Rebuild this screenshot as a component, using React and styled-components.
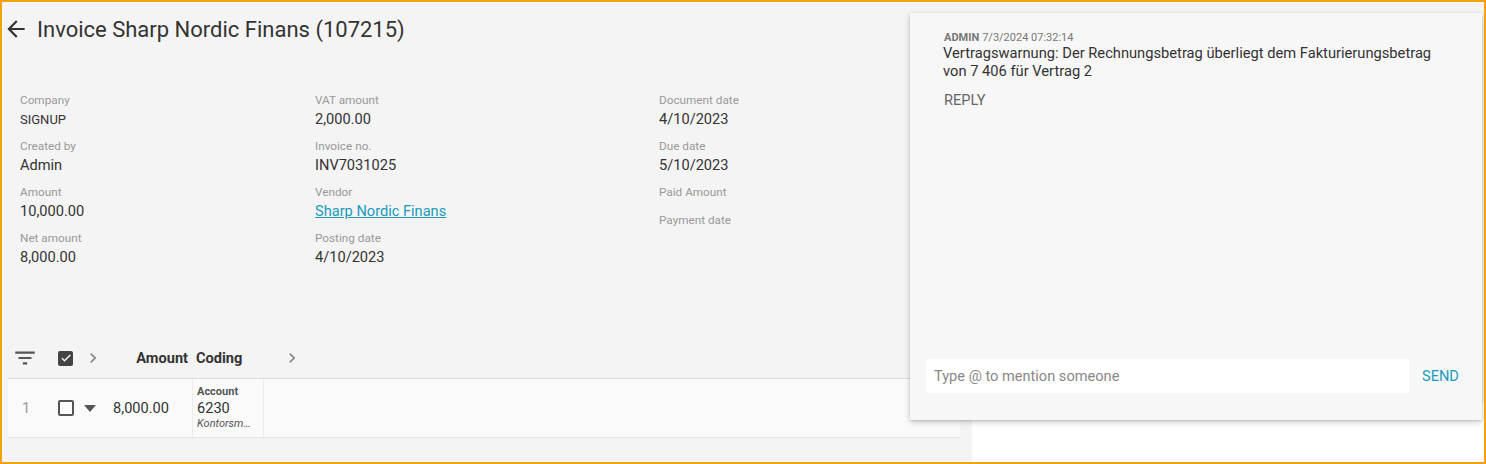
import React from "react";
import styled, { createGlobalStyle } from "styled-components";

const Global = createGlobalStyle`
  html, body { margin: 0; padding: 0; }
  body { font-family: Roboto, "Noto Sans", Arial, sans-serif; color: #333; }
  * { box-sizing: border-box; }
`;

const Frame = styled.div`
  position: relative;
  width: 1486px;
  height: 464px;
  border: 2px solid #f2a20c;
  display: flex;
  background: #f4f4f4;
  overflow: hidden;
`;

const Main = styled.div`
  width: 970px;
  display: flex;
  flex-direction: column;
  background: #f4f4f4;
`;

const Side = styled.div`
  flex: 1;
  display: flex;
  flex-direction: column;
`;

const SideTop = styled.div`
  height: 400px;
  background: #f4f4f4;
`;

const SideBody = styled.div`
  flex: 1;
  background: #fff;
`;

const Header = styled.div`
  display: flex;
  align-items: center;
  gap: 8px;
  height: 52px;
  padding: 2px 0 0 1px;
`;

const Title = styled.h1`
  margin: 0;
  font-size: 22px;
  font-weight: 400;
  color: #333;
`;

const BackButton = styled.button`
  border: 0;
  background: none;
  padding: 0;
  width: 26px;
  height: 26px;
  display: flex;
  align-items: center;
  justify-content: center;
  cursor: pointer;
`;

const Details = styled.div`
  display: grid;
  grid-template-columns: 295px 344px 1fr;
  padding: 39px 0 0 18px;
  height: 286px;
`;

const Column = styled.div`
  display: flex;
  flex-direction: column;
`;

const Field = styled.div`
  display: flex;
  flex-direction: column;
  min-height: ${(p) => (p.$empty ? "28px" : "46px")};
`;

const Label = styled.span`
  font-size: 11.75px;
  color: #999;
  line-height: 15px;
`;

const Value = styled.span`
  font-size: ${(p) => (p.$small ? "13px" : "14.6px")};
  color: #333;
  line-height: 20px;
  margin-top: ${(p) => (p.$small ? "2px" : "1px")};
`;

const Link = styled.a`
  font-size: 14.6px;
  line-height: 20px;
  margin-top: 1px;
  color: #1a9bbb;
  text-decoration: underline;
`;

const Table = styled.div`
  margin: 0 12px 0 6px;
  display: flex;
  flex-direction: column;
`;

const columns = "42px 32px 32px 78px 72px 1fr";

const HeadRow = styled.div`
  display: grid;
  grid-template-columns: ${columns};
  height: 39px;
  padding-bottom: 2px;
  align-items: center;
  border-bottom: 1px solid #dcdcdc;
`;

const BodyRow = styled.div`
  display: grid;
  grid-template-columns: ${columns};
  height: 59px;
  align-items: stretch;
  background: #fafafa;
  border-bottom: 1px solid #e6e6e6;
`;

const Cell = styled.div`
  display: flex;
  align-items: center;
  justify-content: ${(p) => p.$justify || "flex-start"};
  padding-left: ${(p) => p.$pl || 0}px;
  padding-right: ${(p) => p.$pr || 0}px;
  font-size: 14.6px;
  color: ${(p) => p.$color || "#333"};
  font-weight: ${(p) => (p.$bold ? 700 : 400)};
`;

const CodingCell = styled.div`
  display: flex;
  flex-direction: column;
  justify-content: center;
  padding-left: 4px;
  border-left: 1px solid #ececec;
  border-right: 1px solid #ececec;
`;

const CodingLabel = styled.span`
  font-size: 11px;
  font-weight: 700;
  color: #555;
  line-height: 14px;
`;

const CodingValue = styled.span`
  font-size: 14.6px;
  color: #333;
  line-height: 18px;
`;

const CodingDesc = styled.span`
  font-size: 11px;
  font-style: italic;
  color: #555;
  line-height: 14px;
`;

const Checkbox = styled.span`
  width: ${(p) => (p.$checked ? "15px" : "16px")};
  height: ${(p) => (p.$checked ? "15px" : "16px")};
  border-radius: 2px;
  display: flex;
  align-items: center;
  justify-content: center;
  background: ${(p) => (p.$checked ? "#444" : "transparent")};
  border: ${(p) => (p.$checked ? "none" : "2px solid #555")};
`;

const Panel = styled.div`
  position: absolute;
  left: 908px;
  top: 11px;
  width: 572px;
  height: 407px;
  background: #f7f7f7;
  box-shadow: 0 2px 6px rgba(0, 0, 0, 0.22), 0 1px 2px rgba(0, 0, 0, 0.1);
  display: flex;
  flex-direction: column;
  padding: 18px 16px 27px 16px;
`;

const Comment = styled.div`
  flex: 1;
  display: flex;
  flex-direction: column;
  padding-left: 17px;
`;

const Meta = styled.div`
  font-size: 11px;
  color: #777;
  line-height: 13px;
  padding-left: 1px;
`;

const Author = styled.span`
  font-weight: 700;
  margin-right: 3px;
`;

const Message = styled.div`
  font-size: 14.7px;
  color: #333;
  line-height: 18px;
  width: 500px;
`;

const ReplyButton = styled.button`
  align-self: flex-start;
  margin-top: 11px;
  border: 0;
  background: none;
  padding: 0 0 0 1px;
  font-family: inherit;
  font-size: 14.6px;
  color: #666;
  text-transform: uppercase;
`;

const Composer = styled.div`
  display: flex;
  align-items: center;
  gap: 13px;
`;

const Input = styled.input`
  width: 483px;
  height: 34px;
  border: 0;
  border-radius: 3px;
  background: #fff;
  padding: 0 8px;
  font-family: inherit;
  font-size: 14.6px;
  color: #333;
  outline: none;
  &::placeholder { color: #888; }
`;

const SendButton = styled.button`
  border: 0;
  background: none;
  padding: 0;
  font-family: inherit;
  font-size: 14.6px;
  color: #1a9bbb;
  text-transform: uppercase;
`;

const ArrowLeft = () => (
  <svg width="26" height="26" viewBox="0 0 24 24">
    <path d="M20 11H7.83l5.59-5.59L12 4l-8 8 8 8 1.41-1.41L7.83 13H20v-2z" fill="#333" />
  </svg>
);

const FilterIcon = () => (
  <svg width="26" height="26" viewBox="0 0 24 24">
    <path d="M10 18h4v-2h-4v2zM3 6v2h18V6H3zm3 7h12v-2H6v2z" fill="#555" />
  </svg>
);

const CheckMark = () => (
  <svg width="12" height="12" viewBox="0 0 24 24">
    <path d="M9 16.17L4.83 12l-1.42 1.41L9 19 21 7l-1.41-1.41z" fill="#fff" stroke="#fff" strokeWidth="1" />
  </svg>
);

const Chevron = () => (
  <svg width="20" height="20" viewBox="0 0 24 24">
    <path d="M10 6L8.59 7.41 13.17 12l-4.58 4.59L10 18l6-6z" fill="#888" />
  </svg>
);

const Caret = () => (
  <svg width="12" height="7" viewBox="0 0 12 7">
    <path d="M0 0h12L6 7z" fill="#555" />
  </svg>
);

const col1 = [
  { label: "Company", value: "SIGNUP", small: true },
  { label: "Created by", value: "Admin" },
  { label: "Amount", value: "10,000.00" },
  { label: "Net amount", value: "8,000.00" },
];

const col3 = [
  { label: "Document date", value: "4/10/2023" },
  { label: "Due date", value: "5/10/2023" },
  { label: "Paid Amount" },
  { label: "Payment date" },
];

const renderField = (f) => (
  <Field key={f.label} $empty={!f.value}>
    <Label>{f.label}</Label>
    {f.value && <Value $small={f.small}>{f.value}</Value>}
  </Field>
);

export default function App() {
  return (
    <>
      <Global />
      <Frame>
        <Main>
          <Header>
            <BackButton aria-label="Back">
              <ArrowLeft />
            </BackButton>
            <Title>Invoice Sharp Nordic Finans (107215)</Title>
          </Header>
          <Details>
            <Column>{col1.map(renderField)}</Column>
            <Column>
              {renderField({ label: "VAT amount", value: "2,000.00" })}
              {renderField({ label: "Invoice no.", value: "INV7031025" })}
              <Field>
                <Label>Vendor</Label>
                <Link href="#">Sharp Nordic Finans</Link>
              </Field>
              {renderField({ label: "Posting date", value: "4/10/2023" })}
            </Column>
            <Column>{col3.map(renderField)}</Column>
          </Details>
          <Table>
            <HeadRow>
              <Cell $pl={4}>
                <FilterIcon />
              </Cell>
              <Cell $pl={8}>
                <Checkbox $checked>
                  <CheckMark />
                </Checkbox>
              </Cell>
              <Cell $pl={1}>
                <Chevron />
              </Cell>
              <Cell $justify="flex-end" $pr={4} $bold>
                Amount
              </Cell>
              <Cell $pl={4} $bold>
                Coding
              </Cell>
              <Cell $pl={18}>
                <Chevron />
              </Cell>
            </HeadRow>
            <BodyRow>
              <Cell $pl={14} $color="#999">
                1
              </Cell>
              <Cell $pl={8}>
                <Checkbox />
              </Cell>
              <Cell $pl={2}>
                <Caret />
              </Cell>
              <Cell $justify="flex-end" $pr={23}>
                8,000.00
              </Cell>
              <CodingCell>
                <CodingLabel>Account</CodingLabel>
                <CodingValue>6230</CodingValue>
                <CodingDesc>Kontorsm…</CodingDesc>
              </CodingCell>
              <div />
            </BodyRow>
          </Table>
        </Main>
        <Side>
          <SideTop />
          <SideBody />
        </Side>
        <Panel>
          <Comment>
            <Meta>
              <Author>ADMIN</Author>7/3/2024 07:32:14
            </Meta>
            <Message>
              Vertragswarnung: Der Rechnungsbetrag überliegt dem Fakturierungsbetrag von 7 406 für Vertrag 2
            </Message>
            <ReplyButton>Reply</ReplyButton>
          </Comment>
          <Composer>
            <Input placeholder="Type @ to mention someone" />
            <SendButton>Send</SendButton>
          </Composer>
        </Panel>
      </Frame>
    </>
  );
}
